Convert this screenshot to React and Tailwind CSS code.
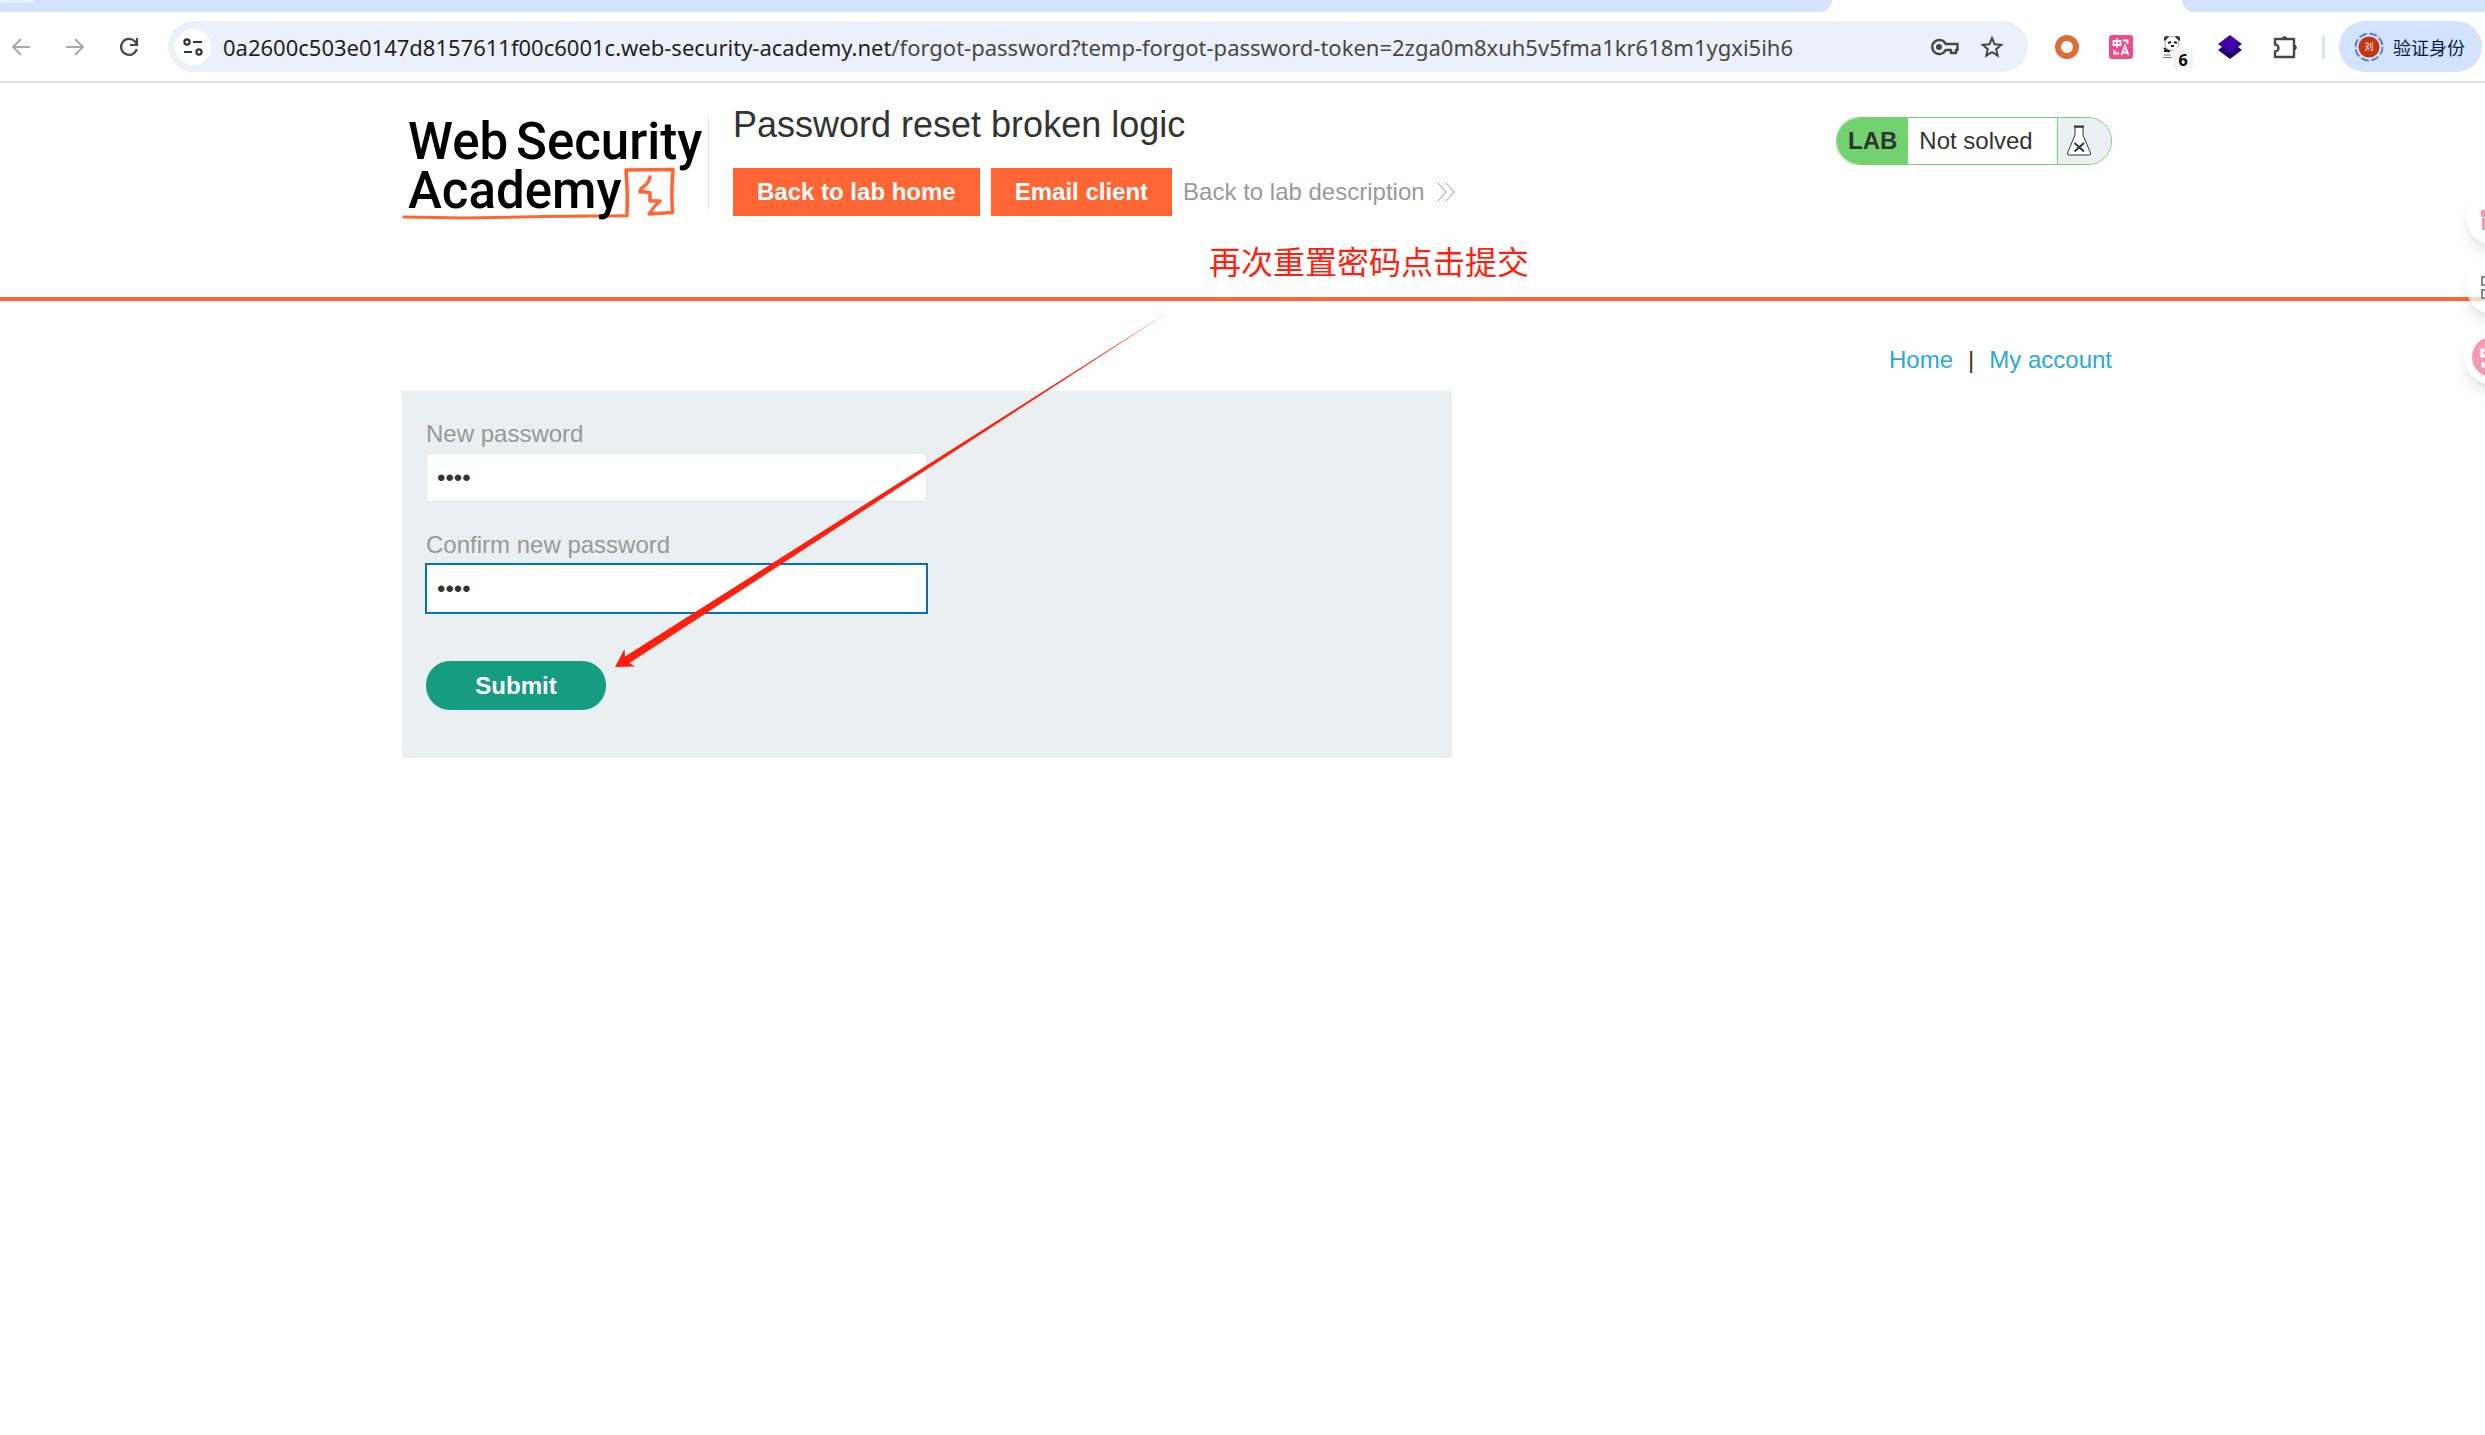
import React, { useState } from 'react';

const URL_HOST = '0a2600c503e0147d8157611f00c6001c.web-security-academy.net';
const URL_PATH = '/forgot-password?temp-forgot-password-token=2zga0m8xuh5v5fma1kr618m1ygxi5ih6';

export default function App() {
  return (
    <div className="min-h-screen overflow-hidden bg-white font-['Liberation_Sans',Arial,'Noto_Sans_CJK_SC',sans-serif] text-2xl leading-8 text-[#333332]">
      <TabStrip />
      <Toolbar />
      {/* The page runs a little past the right edge of the window */}
      <div className="relative -mr-[29px]">
        <LabHeader />
        <ResetPage />
        <Annotation />
        <FloatingTools />
      </div>
    </div>
  );
}

function TabStrip() {
  return (
    <div className="flex h-3">
      <div className="w-[1832px] rounded-br-xl bg-[#d3e3fd]">
        <div className="h-[3px] w-[34px] rounded-b-full bg-[#e9f1fe]" />
      </div>
      <div className="w-[350px]" />
      <div className="flex-1 rounded-bl-xl bg-[#d3e3fd]" />
    </div>
  );
}

function Toolbar() {
  return (
    <div className="flex h-[71px] items-center border-b-2 border-[#dfe0e1] pr-[3px] pl-[11px]">
      <div className="flex gap-[34px]">
        <button aria-label="Back"><ArrowIcon /></button>
        <button aria-label="Forward"><ArrowIcon flip /></button>
        <button aria-label="Reload"><ReloadIcon /></button>
      </div>
      <AddressBar />
      <Extensions />
      <span className="ml-[23px] h-6 w-[3px] rounded-full bg-[#d3e3fd]" />
      <button className="ml-[14px] flex h-[51px] w-[143px] items-center gap-[9px] rounded-full bg-[#d3e3fd] pl-[15px] font-['Noto_Sans_CJK_SC',sans-serif] text-lg text-[#041e49]">
        <Avatar />
        验证身份
      </button>
    </div>
  );
}

function AddressBar() {
  return (
    <div className="ml-[29px] flex h-[51px] min-w-0 flex-1 items-center rounded-full bg-[#ecf0fa] pr-6 pl-[7px]">
      <button aria-label="Site information" className="grid size-9 shrink-0 place-items-center rounded-full bg-white">
        <svg width="20" height="20" viewBox="0 0 20 20" fill="none" stroke="#333" strokeWidth="2.2">
          <circle cx="4" cy="5" r="2.6" />
          <path d="M10 5h9M1 15h8" />
          <circle cx="16" cy="15" r="2.6" />
        </svg>
      </button>
      <span className="ml-3 flex-1 truncate font-['Noto_Sans',sans-serif] text-[22px] text-[#1f1f1f]">
        {URL_HOST}
        <span className="text-[#474747]">{URL_PATH}</span>
      </span>
      <button aria-label="Passwords">
        <svg width="28" height="18" viewBox="0 0 28 18" fill="none" stroke="#474747" strokeWidth="2.4">
          <path d="M14.6 6A7 7 0 1 0 14.6 12H18v0h2v3h5v-3h1.500V6z" strokeLinejoin="round" />
          <circle cx="8" cy="9" r="3" fill="#474747" stroke="none" />
        </svg>
      </button>
      <button aria-label="Bookmark this page" className="ml-[21px]">
        <StarIcon />
      </button>
    </div>
  );
}

function StarIcon() {
  return (
    <svg width="24" height="24" viewBox="0 0 24 24" fill="none" stroke="#474747" strokeWidth="2">
      <path d="M12 3l2.600 6.200 6.700.6-5.100 4.400 1.500 6.500L12 17.200l-5.700 3.500 1.500-6.500-5.100-4.400 6.700-.6z" />
    </svg>
  );
}

function ArrowIcon({ flip }) {
  return (
    <svg width="20" height="20" viewBox="0 0 20 20" fill="none" stroke="#a8a8a8" strokeWidth="2">
      {flip ? <path d="M1 10h17M10 2l8 8-8 8" /> : <path d="M19 10H2M10 2l-8 8 8 8" />}
    </svg>
  );
}

function ReloadIcon() {
  return (
    <svg width="20" height="20" viewBox="0 0 20 20" fill="none" stroke="#474747" strokeWidth="2.200">
      <path d="M17.800 12A8 8 0 1 1 16 4.500L18 7" />
      <path d="M18 1v7h-7" />
    </svg>
  );
}

function Extensions() {
  return (
    <div className="ml-[27px] flex items-center gap-[30px]">
      <svg width="24" height="24" viewBox="0 0 24 24">
        <circle cx="12" cy="12" r="9" fill="none" stroke="#e16b36" strokeWidth="6" />
      </svg>
      <svg width="24" height="24" viewBox="0 0 24 24" fill="none" stroke="#fff" strokeWidth="1.800">
        <rect width="24" height="24" rx="3" fill="#ee4d8b" stroke="none" />
        <path d="M4.500 6h7v4h-7zM8 3.500v9M14 5.500h4.500v3.500M5.500 15v3.500h4.500M12.500 20l3.500-9 3.500 9M14 17.500h4" />
      </svg>
      <PandaIcon />
      <svg width="26" height="26" viewBox="0 0 26 26">
        <path d="M13 25L1 16l4-3h16l4 3z" fill="#21006e" />
        <path d="M13 1l12 9-12 9L1 10z" fill="#4400a8" />
      </svg>
      <svg width="26" height="26" viewBox="0 0 26 26" fill="none" stroke="#474747" strokeWidth="2.400">
        <path d="M2 5h19v18H2v-5.500a3.500 3.500 0 0 0 0-7z" strokeLinejoin="round" />
        <path d="M9 4a3 3 0 0 1 5 0zM22 11a3 3 0 0 1 0 5z" fill="#474747" strokeWidth="1" />
      </svg>
    </div>
  );
}

function PandaIcon() {
  return (
    <div className="relative">
      <svg width="24" height="24" viewBox="0 0 24 24">
        <circle cx="4" cy="4" r="3" fill="#222" />
        <circle cx="14" cy="4" r="3" fill="#222" />
        <circle cx="9" cy="8.500" r="7" fill="#fff" stroke="#aaa" />
        <path d="M5 8l3-1M11 7l3 1M8 11h3M1 13l5 4M1 16h6" stroke="#222" strokeWidth="2" />
        <path d="M1 20h7M0 22.500h9" stroke="#777" />
      </svg>
      <span className="absolute top-[13px] left-[10px] grid h-5 w-5 place-items-center rounded bg-[#f4f4f4] font-['Noto_Sans',sans-serif] text-base font-bold text-black">
        6
      </span>
    </div>
  );
}

function Avatar() {
  return (
    <span className="grid size-[30px] place-items-center">
      <svg width="30" height="30" viewBox="0 0 30 30" className="col-start-1 row-start-1">
        <circle cx="15" cy="15" r="13.500" fill="none" stroke="#5d80b8" strokeWidth="2" strokeDasharray="8 2.600" />
        <circle cx="15" cy="15" r="10.500" fill="#c5360f" />
      </svg>
      <span className="col-start-1 row-start-1 text-[9px] leading-3 text-white">刘</span>
    </span>
  );
}

function LabHeader() {
  return (
    <header className="h-[218px] border-b-4 border-[#ff6633]">
      <div className="mx-auto flex max-w-[1710px] pt-6">
        <a href="#academy" aria-label="Web Security Academy">
          <AcademyLogo />
        </a>
        <span className="mt-2.5 h-[92px] w-px bg-[#e5e5e5]" />
        <div className="ml-6 flex-1">
          <h2 className="text-4xl leading-9">Password reset broken logic</h2>
          <div className="mt-[25px] flex items-center">
            <a href="#home" className="bg-[#ff6633] px-6 py-2 font-bold text-white">Back to lab home</a>
            <a href="#email" className="ml-[11px] bg-[#ff6633] px-6 py-2 font-bold text-white">Email client</a>
            <a href="#description" className="ml-[11px] flex items-center gap-3 text-[#999]">
              Back to lab description
              <svg width="18" height="18" viewBox="0 0 18 18" fill="none" stroke="#999">
                <path d="M1 0l8 9-8 9M9 0l8 9-8 9" />
              </svg>
            </a>
          </div>
        </div>
        <LabStatus />
      </div>
    </header>
  );
}

function AcademyLogo() {
  return (
    <svg width="306" height="118" viewBox="0 -10 306 118">
      <g fill="#000" fontFamily="Roboto, sans-serif" fontSize="51" fontWeight="500">
        <text x="6" y="42">Web</text>
        <text x="114" y="42">Security</text>
      </g>
      <g fill="none" stroke="#ff6633" strokeLinejoin="round" strokeLinecap="round">
        <path d="M225 98.500Q226 75 224 53l47-.5Q269 75 270.500 95.500L247 97" strokeWidth="3.500" />
        <path d="M248 60q-1 6-7 10-4 4-3 5 4-1 10 1v8h10q-6 5-10 12" strokeWidth="3.500" />
        <path d="M2 100l60 1 80-1.500 82-.8" strokeWidth="3" />
      </g>
      <text x="6" y="91" fill="#000" fontFamily="Roboto, sans-serif" fontSize="51" fontWeight="500">Academy</text>
    </svg>
  );
}

function LabStatus() {
  return (
    <div className="mt-[10px] flex h-12 w-[276px] overflow-hidden rounded-3xl border border-[#71d26f]">
      <span className="flex items-center bg-[#71d26f] px-[11px] font-bold">LAB</span>
      <span className="flex flex-1 items-center pl-[11px]">Not solved</span>
      <span className="flex w-[54px] items-center border-l border-[#71d26f] bg-[#eaeff2] pl-2">
        <svg width="26" height="32" viewBox="0 0 26 32" fill="#fff" stroke="#333332">
          <path d="M9 2v8L1.500 28q-.8 2 1.500 2h20q2.300 0 1.500-2L17 10V2z" />
          <path d="M8 1.500h10" strokeWidth="2" />
          <path d="M8.500 18l9.500 8.500M18 18l-9.500 8.500" strokeWidth="2" />
        </svg>
      </span>
    </div>
  );
}

function ResetPage() {
  const [password, setPassword] = useState('abcd');
  const [confirm, setConfirm] = useState('abcd');

  return (
    <main className="mx-auto max-w-[1710px] pt-[43px]">
      <nav className="flex justify-end gap-[15px]">
        <a href="#home" className="text-[#29a7df]">Home</a>
        <span>|</span>
        <a href="#account" className="text-[#29a7df]">My account</a>
      </nav>
      <form
        className="mt-[15px] w-[1050px] bg-[#eaeff2] px-6 pt-[27px] pb-12"
        onSubmit={(e) => e.preventDefault()}
      >
        <PasswordField id="new-password" label="New password" value={password} onChange={setPassword} />
        <PasswordField id="confirm-password" label="Confirm new password" value={confirm} onChange={setConfirm} active />
        <button className="mt-12 block h-[49px] w-[180px] rounded-3xl bg-[#169c80] font-bold text-white">
          Submit
        </button>
      </form>
    </main>
  );
}

function PasswordField({ id, label, value, onChange, active }) {
  return (
    <div className={active ? 'mt-[27px]' : ''}>
      <label htmlFor={id} className="block text-[#999]">{label}</label>
      <input
        id={id}
        type="password"
        value={value}
        onChange={(e) => onChange(e.target.value)}
        className={`mt-[3px] block h-[49px] w-[501px] border bg-white px-[10px] outline-none ${
          active ? 'border-[#0271bb] ring-1 ring-[#0271bb]' : 'border-[#e5e6e7]'
        }`}
      />
    </div>
  );
}

// Red note and arrow drawn over the page
function Annotation() {
  return (
    <>
      <p className="absolute top-[157px] left-[1209px] font-['Noto_Sans_CJK_SC',sans-serif] text-[32px] leading-10 text-[#ff1f0f]">
        再次重置密码点击提交
      </p>
      <svg className="pointer-events-none absolute top-[230px] left-[615px]" width="554" height="356" viewBox="0 0 554 356">
        <path d="M0 354l9.500-18 .5 7.500L552 0 14.500 350l5.500 3.500z" fill="#ff1f0f" />
      </svg>
    </>
  );
}

function FloatingTools() {
  return (
    <div className="absolute top-[108px] -right-1.5 flex flex-col items-end gap-[15px]">
      <button aria-label="Gifts" className="flex size-[54px] items-center rounded-full bg-white/70 pl-[15px] shadow-lg">
        <svg width="24" height="24" viewBox="0 0 24 24" fill="#f299b3">
          <path d="M0 4h24v7H0zM1 12h22v12H1z" />
        </svg>
      </button>
      <button aria-label="Apps" className="flex size-[54px] items-center rounded-full bg-white/70 pl-[15px] shadow-lg">
        <svg width="24" height="24" viewBox="0 0 24 24" fill="none" stroke="#888" strokeWidth="2">
          <path d="M1 2h8v8H1zM1 15h8v8H1zM14 2h8v8h-8zM14 15h8v8h-8z" />
        </svg>
      </button>
      <button aria-label="Translate" className="grid size-14 place-items-center rounded-full bg-white shadow-lg">
        <span className="flex size-10 items-center rounded-full bg-[#f299b3] pl-2">
          <svg width="24" height="24" viewBox="0 0 24 24" fill="none" stroke="#fff" strokeWidth="3">
            <path d="M2 5h10v6H2zM7 1v14M3 17v4h5" />
          </svg>
        </span>
      </button>
    </div>
  );
}
